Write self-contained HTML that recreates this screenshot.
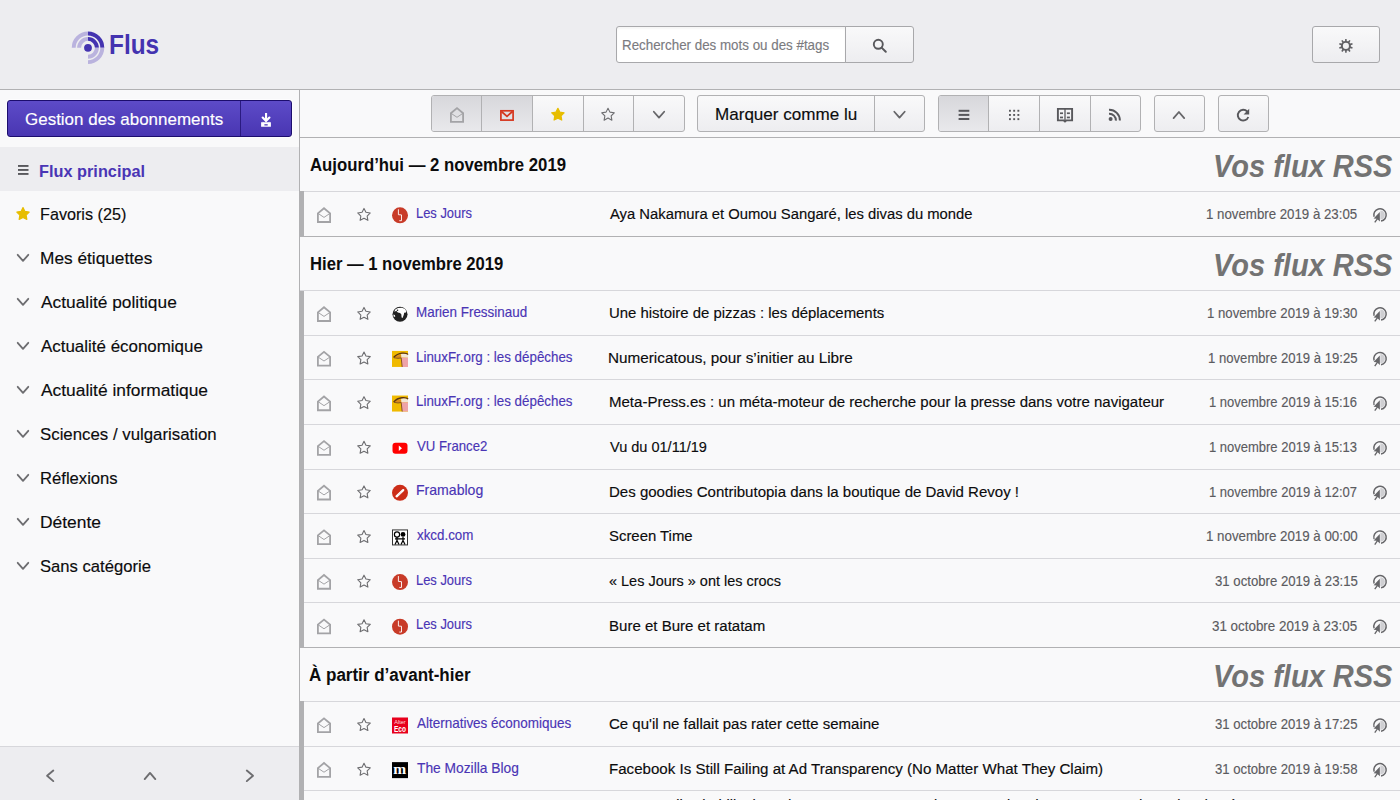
<!DOCTYPE html>
<html><head><meta charset="utf-8"><title>Flus</title>
<style>
html,body{margin:0;padding:0;width:1400px;height:800px;overflow:hidden;background:#f9f9fa;font-family:"Liberation Sans",sans-serif;}
.a,.b,.t{position:absolute;box-sizing:border-box;}
.t{white-space:pre;}
.r{-webkit-text-stroke:0.15px currentColor;}
.ic{position:absolute;left:0;top:0;}
</style></head><body>
<div class="a" style="left:0;top:0;width:1400px;height:90px;background:#ededf0;border-bottom:1px solid #b1b1b3"></div>
<div class="a" style="left:616px;top:26px;width:230px;height:37px;background:#fff;border:1px solid #a8a8ab;border-radius:3px 0 0 3px;box-shadow:inset 0 2px 2px rgba(0,0,0,.04)"></div>
<div class="a" style="left:845px;top:26px;width:69px;height:37px;background:linear-gradient(#f9f9fa,#ededf0);border:1px solid #b1b1b3;border-color:#a8a8ab;border-radius:0 3px 3px 0"></div>
<div class="a" style="left:1312px;top:26px;width:68px;height:37px;background:linear-gradient(#f9f9fa,#ededf0);border:1px solid #b1b1b3;border-color:#a8a8ab;border-radius:3px"></div>

<div class="a" style="left:0;top:90px;width:300px;height:710px;background:#f9f9fa;border-right:1px solid #b1b1b3"></div>
<div class="a" style="left:7px;top:100px;width:285px;height:37px;background:linear-gradient(#5d4bc8,#4936b2);border:1px solid #1c0d6e;border-radius:3px;box-shadow:0 0 0 1px rgba(255,255,255,.7)"></div>
<div class="a" style="left:240px;top:101px;width:1px;height:35px;background:#2a1a80"></div>
<div class="a" style="left:0;top:147px;width:299px;height:44px;background:#ededf0"></div>
<div class="a" style="left:0;top:746px;width:299px;height:54px;background:#ededf0;border-top:1px solid #d7d7db"></div>

<div class="a" style="left:300px;top:90px;width:1100px;height:48px;background:#f9f9fa;border-bottom:1px solid #b1b1b3"></div>
<div class="a" style="left:431px;top:95px;width:254px;height:37px;background:linear-gradient(#f9f9fa,#ededf0);border:1px solid #b1b1b3;border-radius:3px;overflow:hidden">
  <div class="a" style="left:0;top:0;width:101px;height:35px;background:linear-gradient(#d7d7db,#e9e9ec);"></div>
  <div class="a" style="left:49px;top:0;width:1px;height:35px;background:#b1b1b3"></div>
  <div class="a" style="left:100px;top:0;width:1px;height:35px;background:#b1b1b3"></div>
  <div class="a" style="left:151px;top:0;width:1px;height:35px;background:#b1b1b3"></div>
  <div class="a" style="left:201px;top:0;width:1px;height:35px;background:#b1b1b3"></div>
</div>
<div class="a" style="left:697px;top:95px;width:228px;height:37px;background:linear-gradient(#f9f9fa,#ededf0);border:1px solid #b1b1b3;border-radius:3px;overflow:hidden">
  <div class="a" style="left:176px;top:0;width:1px;height:35px;background:#b1b1b3"></div>
</div>
<div class="a" style="left:938px;top:95px;width:203px;height:37px;background:linear-gradient(#f9f9fa,#ededf0);border:1px solid #b1b1b3;border-radius:3px;overflow:hidden">
  <div class="a" style="left:0;top:0;width:50px;height:35px;background:linear-gradient(#d7d7db,#e9e9ec);"></div>
  <div class="a" style="left:49px;top:0;width:1px;height:35px;background:#b1b1b3"></div>
  <div class="a" style="left:100px;top:0;width:1px;height:35px;background:#b1b1b3"></div>
  <div class="a" style="left:151px;top:0;width:1px;height:35px;background:#b1b1b3"></div>
</div>
<div class="a" style="left:1154px;top:95px;width:51px;height:37px;background:linear-gradient(#f9f9fa,#ededf0);border:1px solid #b1b1b3;border-radius:3px"></div>
<div class="a" style="left:1218px;top:95px;width:51px;height:37px;background:linear-gradient(#f9f9fa,#ededf0);border:1px solid #b1b1b3;border-radius:3px"></div>

<div class="b" style="left:300px;top:191.000px;width:1100px;height:1px;background:#d7d7db"></div>
<div class="b" style="left:300px;top:236.000px;width:1100px;height:1px;background:#b1b1b3"></div>
<div class="b" style="left:300px;top:290.000px;width:1100px;height:1px;background:#d7d7db"></div>
<div class="b" style="left:300px;top:334.625px;width:1100px;height:1px;background:#d7d7db"></div>
<div class="b" style="left:300px;top:379.250px;width:1100px;height:1px;background:#d7d7db"></div>
<div class="b" style="left:300px;top:423.875px;width:1100px;height:1px;background:#d7d7db"></div>
<div class="b" style="left:300px;top:468.500px;width:1100px;height:1px;background:#d7d7db"></div>
<div class="b" style="left:300px;top:513.125px;width:1100px;height:1px;background:#d7d7db"></div>
<div class="b" style="left:300px;top:557.750px;width:1100px;height:1px;background:#d7d7db"></div>
<div class="b" style="left:300px;top:602.375px;width:1100px;height:1px;background:#d7d7db"></div>
<div class="b" style="left:300px;top:647.000px;width:1100px;height:1px;background:#b1b1b3"></div>
<div class="b" style="left:300px;top:701.200px;width:1100px;height:1px;background:#d7d7db"></div>
<div class="b" style="left:300px;top:745.825px;width:1100px;height:1px;background:#d7d7db"></div>
<div class="b" style="left:300px;top:790.450px;width:1100px;height:1px;background:#d7d7db"></div>
<div class="b" style="left:300px;top:191.000px;width:4px;height:45.000px;background:#b1b1b3"></div>
<div class="b" style="left:300px;top:291.000px;width:4px;height:356.000px;background:#b1b1b3"></div>
<div class="b" style="left:300px;top:701.200px;width:4px;height:98.800px;background:#b1b1b3"></div>
<div class="t" id="t0" style="top:30.62px;left:108.93px;font-size:27.50px;line-height:27.50px;color:#4433b0;font-weight:bold;font-style:normal;transform:scaleX(0.8870);transform-origin:0 0;">Flus</div>
<div class="t r" id="t1" style="top:37.92px;left:621.58px;font-size:14.50px;line-height:14.50px;color:#7b7b7f;font-weight:normal;font-style:normal;transform:scaleX(0.9211);transform-origin:0 0;">Rechercher des mots ou des #tags</div>
<div class="t r" id="t2" style="top:111.01px;left:24.70px;font-size:17.00px;line-height:17.00px;color:#ffffff;font-weight:normal;font-style:normal;transform:scaleX(0.9985);transform-origin:0 0;">Gestion des abonnements</div>
<div class="t" id="t3" style="top:162.71px;left:39.04px;font-size:17.00px;line-height:17.00px;color:#4a35b5;font-weight:bold;font-style:normal;transform:scaleX(0.9593);transform-origin:0 0;">Flux principal</div>
<div class="t r" id="t4" style="top:205.91px;left:40.05px;font-size:17.00px;line-height:17.00px;color:#0c0c0d;font-weight:normal;font-style:normal;transform:scaleX(0.9517);transform-origin:0 0;">Favoris (25)</div>
<div class="t r" id="t5" style="top:249.91px;left:39.78px;font-size:17.00px;line-height:17.00px;color:#0c0c0d;font-weight:normal;font-style:normal;transform:scaleX(1.0156);transform-origin:0 0;">Mes étiquettes</div>
<div class="t r" id="t6" style="top:293.91px;left:40.80px;font-size:17.00px;line-height:17.00px;color:#0c0c0d;font-weight:normal;font-style:normal;transform:scaleX(1.0188);transform-origin:0 0;">Actualité politique</div>
<div class="t r" id="t7" style="top:337.91px;left:40.80px;font-size:17.00px;line-height:17.00px;color:#0c0c0d;font-weight:normal;font-style:normal;transform:scaleX(0.9957);transform-origin:0 0;">Actualité économique</div>
<div class="t r" id="t8" style="top:381.91px;left:40.80px;font-size:17.00px;line-height:17.00px;color:#0c0c0d;font-weight:normal;font-style:normal;transform:scaleX(1.0215);transform-origin:0 0;">Actualité informatique</div>
<div class="t r" id="t9" style="top:425.91px;left:39.81px;font-size:17.00px;line-height:17.00px;color:#0c0c0d;font-weight:normal;font-style:normal;transform:scaleX(0.9893);transform-origin:0 0;">Sciences / vulgarisation</div>
<div class="t r" id="t10" style="top:469.91px;left:39.82px;font-size:17.00px;line-height:17.00px;color:#0c0c0d;font-weight:normal;font-style:normal;transform:scaleX(0.9782);transform-origin:0 0;">Réflexions</div>
<div class="t r" id="t11" style="top:513.91px;left:39.78px;font-size:17.00px;line-height:17.00px;color:#0c0c0d;font-weight:normal;font-style:normal;transform:scaleX(1.0241);transform-origin:0 0;">Détente</div>
<div class="t r" id="t12" style="top:557.91px;left:39.82px;font-size:17.00px;line-height:17.00px;color:#0c0c0d;font-weight:normal;font-style:normal;transform:scaleX(0.9786);transform-origin:0 0;">Sans catégorie</div>
<div class="t r" id="t13" style="top:105.81px;left:715.00px;font-size:17.00px;line-height:17.00px;color:#0c0c0d;font-weight:normal;font-style:normal;transform:scaleX(1.0036);transform-origin:0 0;">Marquer comme lu</div>
<div class="t" id="t14" style="top:156.17px;left:309.50px;font-size:18.70px;line-height:18.70px;color:#0c0c0d;font-weight:bold;font-style:normal;transform:scaleX(0.8965);transform-origin:0 0;">Aujourd’hui — 2 novembre 2019</div>
<div class="t" id="t15" style="top:149.51px;left:1212.68px;font-size:32.00px;line-height:32.00px;color:#737373;font-weight:bold;font-style:italic;transform:scaleX(0.9062);transform-origin:0 0;">Vos flux RSS</div>
<div class="t" id="t16" style="top:255.17px;left:309.51px;font-size:18.70px;line-height:18.70px;color:#0c0c0d;font-weight:bold;font-style:normal;transform:scaleX(0.8903);transform-origin:0 0;">Hier — 1 novembre 2019</div>
<div class="t" id="t17" style="top:248.51px;left:1212.68px;font-size:32.00px;line-height:32.00px;color:#737373;font-weight:bold;font-style:italic;transform:scaleX(0.9062);transform-origin:0 0;">Vos flux RSS</div>
<div class="t" id="t18" style="top:666.17px;left:309.49px;font-size:18.70px;line-height:18.70px;color:#0c0c0d;font-weight:bold;font-style:normal;transform:scaleX(0.9097);transform-origin:0 0;">À partir d’avant-hier</div>
<div class="t" id="t19" style="top:659.51px;left:1212.68px;font-size:32.00px;line-height:32.00px;color:#737373;font-weight:bold;font-style:italic;transform:scaleX(0.9062);transform-origin:0 0;">Vos flux RSS</div>
<div class="t r" id="t20" style="top:205.92px;left:415.61px;font-size:14.50px;line-height:14.50px;color:#4a35b5;font-weight:normal;font-style:normal;transform:scaleX(0.8902);transform-origin:0 0;">Les Jours</div>
<div class="t r" id="t21" style="top:206.13px;left:609.50px;font-size:15.20px;line-height:15.20px;color:#0c0c0d;font-weight:normal;font-style:normal;transform:scaleX(0.9744);transform-origin:0 0;">Aya Nakamura et Oumou Sangaré, les divas du monde</div>
<div class="t r" id="t22" style="top:207.18px;left:1206.27px;font-size:14.20px;line-height:14.20px;color:#5b5b5f;font-weight:normal;font-style:normal;transform:scaleX(0.9350);transform-origin:0 0;">1 novembre 2019 à 23:05</div>
<div class="t r" id="t23" style="top:304.92px;left:415.57px;font-size:14.50px;line-height:14.50px;color:#4a35b5;font-weight:normal;font-style:normal;transform:scaleX(0.9254);transform-origin:0 0;">Marien Fressinaud</div>
<div class="t r" id="t24" style="top:305.13px;left:608.52px;font-size:15.20px;line-height:15.20px;color:#0c0c0d;font-weight:normal;font-style:normal;transform:scaleX(0.9821);transform-origin:0 0;">Une histoire de pizzas : les déplacements</div>
<div class="t r" id="t25" style="top:306.18px;left:1207.07px;font-size:14.20px;line-height:14.20px;color:#5b5b5f;font-weight:normal;font-style:normal;transform:scaleX(0.9300);transform-origin:0 0;">1 novembre 2019 à 19:30</div>
<div class="t r" id="t26" style="top:349.55px;left:415.58px;font-size:14.50px;line-height:14.50px;color:#4a35b5;font-weight:normal;font-style:normal;transform:scaleX(0.9201);transform-origin:0 0;">LinuxFr.org : les dépêches</div>
<div class="t r" id="t27" style="top:349.76px;left:608.49px;font-size:15.20px;line-height:15.20px;color:#0c0c0d;font-weight:normal;font-style:normal;transform:scaleX(1.0066);transform-origin:0 0;">Numericatous, pour s’initier au Libre</div>
<div class="t r" id="t28" style="top:350.80px;left:1207.98px;font-size:14.20px;line-height:14.20px;color:#5b5b5f;font-weight:normal;font-style:normal;transform:scaleX(0.9244);transform-origin:0 0;">1 novembre 2019 à 19:25</div>
<div class="t r" id="t29" style="top:394.17px;left:415.58px;font-size:14.50px;line-height:14.50px;color:#4a35b5;font-weight:normal;font-style:normal;transform:scaleX(0.9201);transform-origin:0 0;">LinuxFr.org : les dépêches</div>
<div class="t r" id="t30" style="top:394.38px;left:608.51px;font-size:15.20px;line-height:15.20px;color:#0c0c0d;font-weight:normal;font-style:normal;transform:scaleX(0.9888);transform-origin:0 0;">Meta-Press.es : un méta-moteur de recherche pour la presse dans votre navigateur</div>
<div class="t r" id="t31" style="top:395.43px;left:1209.38px;font-size:14.20px;line-height:14.20px;color:#5b5b5f;font-weight:normal;font-style:normal;transform:scaleX(0.9156);transform-origin:0 0;">1 novembre 2019 à 15:16</div>
<div class="t r" id="t32" style="top:438.80px;left:416.50px;font-size:14.50px;line-height:14.50px;color:#4a35b5;font-weight:normal;font-style:normal;transform:scaleX(0.9091);transform-origin:0 0;">VU France2</div>
<div class="t r" id="t33" style="top:439.01px;left:609.50px;font-size:15.20px;line-height:15.20px;color:#0c0c0d;font-weight:normal;font-style:normal;transform:scaleX(0.9564);transform-origin:0 0;">Vu du 01/11/19</div>
<div class="t r" id="t34" style="top:440.05px;left:1209.38px;font-size:14.20px;line-height:14.20px;color:#5b5b5f;font-weight:normal;font-style:normal;transform:scaleX(0.9156);transform-origin:0 0;">1 novembre 2019 à 15:13</div>
<div class="t r" id="t35" style="top:483.42px;left:415.53px;font-size:14.50px;line-height:14.50px;color:#4a35b5;font-weight:normal;font-style:normal;transform:scaleX(0.9706);transform-origin:0 0;">Framablog</div>
<div class="t r" id="t36" style="top:483.63px;left:608.51px;font-size:15.20px;line-height:15.20px;color:#0c0c0d;font-weight:normal;font-style:normal;transform:scaleX(0.9891);transform-origin:0 0;">Des goodies Contributopia dans la boutique de David Revoy !</div>
<div class="t r" id="t37" style="top:484.68px;left:1209.38px;font-size:14.20px;line-height:14.20px;color:#5b5b5f;font-weight:normal;font-style:normal;transform:scaleX(0.9156);transform-origin:0 0;">1 novembre 2019 à 12:07</div>
<div class="t r" id="t38" style="top:528.05px;left:416.50px;font-size:14.50px;line-height:14.50px;color:#4a35b5;font-weight:normal;font-style:normal;transform:scaleX(0.9197);transform-origin:0 0;">xkcd.com</div>
<div class="t r" id="t39" style="top:528.26px;left:608.52px;font-size:15.20px;line-height:15.20px;color:#0c0c0d;font-weight:normal;font-style:normal;transform:scaleX(0.9810);transform-origin:0 0;">Screen Time</div>
<div class="t r" id="t40" style="top:529.30px;left:1205.76px;font-size:14.20px;line-height:14.20px;color:#5b5b5f;font-weight:normal;font-style:normal;transform:scaleX(0.9381);transform-origin:0 0;">1 novembre 2019 à 00:00</div>
<div class="t r" id="t41" style="top:572.67px;left:415.61px;font-size:14.50px;line-height:14.50px;color:#4a35b5;font-weight:normal;font-style:normal;transform:scaleX(0.8902);transform-origin:0 0;">Les Jours</div>
<div class="t r" id="t42" style="top:572.88px;left:608.55px;font-size:15.20px;line-height:15.20px;color:#0c0c0d;font-weight:normal;font-style:normal;transform:scaleX(0.9525);transform-origin:0 0;">« Les Jours » ont les crocs</div>
<div class="t r" id="t43" style="top:573.93px;left:1214.77px;font-size:14.20px;line-height:14.20px;color:#5b5b5f;font-weight:normal;font-style:normal;transform:scaleX(0.9283);transform-origin:0 0;">31 octobre 2019 à 23:15</div>
<div class="t r" id="t44" style="top:617.30px;left:415.61px;font-size:14.50px;line-height:14.50px;color:#4a35b5;font-weight:normal;font-style:normal;transform:scaleX(0.8902);transform-origin:0 0;">Les Jours</div>
<div class="t r" id="t45" style="top:617.51px;left:608.51px;font-size:15.20px;line-height:15.20px;color:#0c0c0d;font-weight:normal;font-style:normal;transform:scaleX(0.9897);transform-origin:0 0;">Bure et Bure et ratatam</div>
<div class="t r" id="t46" style="top:618.55px;left:1212.46px;font-size:14.20px;line-height:14.20px;color:#5b5b5f;font-weight:normal;font-style:normal;transform:scaleX(0.9434);transform-origin:0 0;">31 octobre 2019 à 23:05</div>
<div class="t r" id="t47" style="top:716.12px;left:416.50px;font-size:14.50px;line-height:14.50px;color:#4a35b5;font-weight:normal;font-style:normal;transform:scaleX(0.9283);transform-origin:0 0;">Alternatives économiques</div>
<div class="t r" id="t48" style="top:716.33px;left:608.51px;font-size:15.20px;line-height:15.20px;color:#0c0c0d;font-weight:normal;font-style:normal;transform:scaleX(0.9875);transform-origin:0 0;">Ce qu'il ne fallait pas rater cette semaine</div>
<div class="t r" id="t49" style="top:717.38px;left:1215.07px;font-size:14.20px;line-height:14.20px;color:#5b5b5f;font-weight:normal;font-style:normal;transform:scaleX(0.9263);transform-origin:0 0;">31 octobre 2019 à 17:25</div>
<div class="t r" id="t50" style="top:760.75px;left:416.50px;font-size:14.50px;line-height:14.50px;color:#4a35b5;font-weight:normal;font-style:normal;transform:scaleX(0.9500);transform-origin:0 0;">The Mozilla Blog</div>
<div class="t r" id="t51" style="top:760.96px;left:608.51px;font-size:15.20px;line-height:15.20px;color:#0c0c0d;font-weight:normal;font-style:normal;transform:scaleX(0.9943);transform-origin:0 0;">Facebook Is Still Failing at Ad Transparency (No Matter What They Claim)</div>
<div class="t r" id="t52" style="top:762.00px;left:1215.07px;font-size:14.20px;line-height:14.20px;color:#5b5b5f;font-weight:normal;font-style:normal;transform:scaleX(0.9263);transform-origin:0 0;">31 octobre 2019 à 19:58</div>
<div class="t r" id="t53" style="top:796.83px;left:608.54px;font-size:15.20px;line-height:15.20px;color:#0c0c0d;font-weight:normal;font-style:normal;transform:scaleX(0.9600);transform-origin:0 0;">Les nouvelles habilitations du gouvernement pour la restauration de Notre-Dame de Paris adoptées</div>
<svg class="ic" width="1400" height="800" viewBox="0 0 1400 800"><path d="M88.00 38.90 A8.90 8.90 0 0 1 96.90 47.80" stroke="#4433b0" stroke-width="3.9" fill="none"/><path d="M79.10 47.80 A8.90 8.90 0 0 1 88.00 38.90" stroke="#bab3de" stroke-width="3.9" fill="none"/><path d="M96.90 47.80 A8.90 8.90 0 0 1 88.00 56.70" stroke="#bab3de" stroke-width="3.9" fill="none"/><path d="M88.00 33.50 A14.30 14.30 0 0 1 102.30 47.80" stroke="#4433b0" stroke-width="3.9" fill="none"/><path d="M73.70 47.80 A14.30 14.30 0 0 1 88.00 33.50" stroke="#bab3de" stroke-width="3.9" fill="none"/><path d="M102.30 47.80 A14.30 14.30 0 0 1 88.00 62.10" stroke="#bab3de" stroke-width="3.9" fill="none"/><circle cx="88" cy="47.8" r="3.9" fill="#4433b0"/><circle cx="878.3" cy="44.3" r="4.5" fill="none" stroke="#58585c" stroke-width="1.9"/><path d="M881.6 47.6 L885.8 51.8" stroke="#58585c" stroke-width="2" stroke-linecap="round"/><path d="M1344.80 45.90 L1345.15 39.00 L1346.65 39.00 L1347.00 45.90 Z" transform="rotate(0 1345.90 45.90)" fill="#606064"/><path d="M1344.80 45.90 L1345.15 39.00 L1346.65 39.00 L1347.00 45.90 Z" transform="rotate(36 1345.90 45.90)" fill="#606064"/><path d="M1344.80 45.90 L1345.15 39.00 L1346.65 39.00 L1347.00 45.90 Z" transform="rotate(72 1345.90 45.90)" fill="#606064"/><path d="M1344.80 45.90 L1345.15 39.00 L1346.65 39.00 L1347.00 45.90 Z" transform="rotate(108 1345.90 45.90)" fill="#606064"/><path d="M1344.80 45.90 L1345.15 39.00 L1346.65 39.00 L1347.00 45.90 Z" transform="rotate(144 1345.90 45.90)" fill="#606064"/><path d="M1344.80 45.90 L1345.15 39.00 L1346.65 39.00 L1347.00 45.90 Z" transform="rotate(180 1345.90 45.90)" fill="#606064"/><path d="M1344.80 45.90 L1345.15 39.00 L1346.65 39.00 L1347.00 45.90 Z" transform="rotate(216 1345.90 45.90)" fill="#606064"/><path d="M1344.80 45.90 L1345.15 39.00 L1346.65 39.00 L1347.00 45.90 Z" transform="rotate(252 1345.90 45.90)" fill="#606064"/><path d="M1344.80 45.90 L1345.15 39.00 L1346.65 39.00 L1347.00 45.90 Z" transform="rotate(288 1345.90 45.90)" fill="#606064"/><path d="M1344.80 45.90 L1345.15 39.00 L1346.65 39.00 L1347.00 45.90 Z" transform="rotate(324 1345.90 45.90)" fill="#606064"/><circle cx="1345.9" cy="45.9" r="4.95" fill="#606064"/><circle cx="1345.9" cy="45.9" r="3.05" fill="#f1f1f3"/><rect x="265" y="113" width="2.1" height="7.5" fill="#fff"/><path d="M262.7 117.6 L266.05 121 L269.4 117.6" stroke="#fff" stroke-width="2.2" fill="none" stroke-linecap="round"/><path d="M261.1 122.2 H262.8 V121.5 L263.6 122.2 H268.5 L269.3 121.5 V122.2 H270.9 V126.8 H261.1 Z" fill="#fff"/><rect x="264.4" y="124.2" width="3.3" height="1.3" fill="#4e3bb7"/><rect x="18" y="165.0" width="10.5" height="1.9" fill="#58585c"/><rect x="18" y="169.0" width="10.5" height="1.9" fill="#58585c"/><rect x="18" y="173.0" width="10.5" height="1.9" fill="#58585c"/><path d="M23.00 207.60 L24.94 211.43 L29.18 212.09 L26.14 215.12 L26.82 219.36 L23.00 217.40 L19.18 219.36 L19.86 215.12 L16.82 212.09 L21.06 211.43 Z" fill="#e7bd00" stroke="#e7bd00" stroke-width="1.2" stroke-linejoin="round"/><path d="M17.70 254.80 L23.00 260.80 L28.30 254.80" fill="none" stroke="#6d6d70" stroke-width="1.8" stroke-linecap="round" stroke-linejoin="round"/><path d="M17.70 298.80 L23.00 304.80 L28.30 298.80" fill="none" stroke="#6d6d70" stroke-width="1.8" stroke-linecap="round" stroke-linejoin="round"/><path d="M17.70 342.80 L23.00 348.80 L28.30 342.80" fill="none" stroke="#6d6d70" stroke-width="1.8" stroke-linecap="round" stroke-linejoin="round"/><path d="M17.70 386.80 L23.00 392.80 L28.30 386.80" fill="none" stroke="#6d6d70" stroke-width="1.8" stroke-linecap="round" stroke-linejoin="round"/><path d="M17.70 430.80 L23.00 436.80 L28.30 430.80" fill="none" stroke="#6d6d70" stroke-width="1.8" stroke-linecap="round" stroke-linejoin="round"/><path d="M17.70 474.80 L23.00 480.80 L28.30 474.80" fill="none" stroke="#6d6d70" stroke-width="1.8" stroke-linecap="round" stroke-linejoin="round"/><path d="M17.70 518.80 L23.00 524.80 L28.30 518.80" fill="none" stroke="#6d6d70" stroke-width="1.8" stroke-linecap="round" stroke-linejoin="round"/><path d="M17.70 562.80 L23.00 568.80 L28.30 562.80" fill="none" stroke="#6d6d70" stroke-width="1.8" stroke-linecap="round" stroke-linejoin="round"/><path d="M53.30 770.50 L47.10 775.80 L53.30 781.10" fill="none" stroke="#6d6d70" stroke-width="1.9" stroke-linecap="round" stroke-linejoin="round"/><path d="M144.70 779.10 L150.00 772.90 L155.30 779.10" fill="none" stroke="#6d6d70" stroke-width="1.9" stroke-linecap="round" stroke-linejoin="round"/><path d="M246.80 770.50 L253.00 775.80 L246.80 781.10" fill="none" stroke="#6d6d70" stroke-width="1.9" stroke-linecap="round" stroke-linejoin="round"/><path d="M450.9 121.9 V113.2 L457 108.1 L463.1 113.2 V121.9 Z" fill="none" stroke="#a3a3a6" stroke-width="1.8" stroke-linejoin="miter"/><path d="M450.9 113.2 L457 117.3 L463.1 113.2" fill="none" stroke="#a3a3a6" stroke-width="1"/><rect x="500.9" y="110.8" width="12.2" height="9.3" fill="none" stroke="#d5361e" stroke-width="1.7"/><path d="M501.5 111.5 L507 116.3 L512.5 111.5" fill="none" stroke="#d5361e" stroke-width="1.7"/><path d="M557.90 108.30 L559.84 112.13 L564.08 112.79 L561.04 115.82 L561.72 120.06 L557.90 118.10 L554.08 120.06 L554.76 115.82 L551.72 112.79 L555.96 112.13 Z" fill="#e7bd00" stroke="#e7bd00" stroke-width="1.2" stroke-linejoin="round"/><path d="M608.00 108.20 L609.94 112.13 L614.28 112.76 L611.14 115.82 L611.88 120.14 L608.00 118.10 L604.12 120.14 L604.86 115.82 L601.72 112.76 L606.06 112.13 Z" fill="none" stroke="#6d6d70" stroke-width="1.1" stroke-linejoin="round"/><path d="M653.80 111.75 L659.00 117.65 L664.20 111.75" fill="none" stroke="#666669" stroke-width="1.75" stroke-linecap="round" stroke-linejoin="round"/><path d="M894.30 111.75 L899.50 117.65 L904.70 111.75" fill="none" stroke="#666669" stroke-width="1.75" stroke-linecap="round" stroke-linejoin="round"/><rect x="958.6" y="109.8" width="10.7" height="2" fill="#58585c"/><rect x="958.6" y="113.9" width="10.7" height="2" fill="#58585c"/><rect x="958.6" y="118.0" width="10.7" height="2" fill="#58585c"/><rect x="1009.0" y="109.8" width="1.9" height="1.9" fill="#58585c"/><rect x="1009.0" y="114.0" width="1.9" height="1.9" fill="#58585c"/><rect x="1009.0" y="118.2" width="1.9" height="1.9" fill="#58585c"/><rect x="1013.2" y="109.8" width="1.9" height="1.9" fill="#58585c"/><rect x="1013.2" y="114.0" width="1.9" height="1.9" fill="#58585c"/><rect x="1013.2" y="118.2" width="1.9" height="1.9" fill="#58585c"/><rect x="1017.4" y="109.8" width="1.9" height="1.9" fill="#58585c"/><rect x="1017.4" y="114.0" width="1.9" height="1.9" fill="#58585c"/><rect x="1017.4" y="118.2" width="1.9" height="1.9" fill="#58585c"/><path d="M1057.9 108.9 H1072.1 V120.4 H1066.2 L1065 121.4 L1063.8 120.4 H1057.9 Z" fill="none" stroke="#58585c" stroke-width="1.9"/><path d="M1065 109 V120" stroke="#58585c" stroke-width="1.3"/><rect x="1060" y="112.4" width="3" height="1.7" fill="#58585c"/><rect x="1066.9" y="112.4" width="3" height="1.7" fill="#58585c"/><rect x="1060" y="116.6" width="3" height="1.7" fill="#58585c"/><rect x="1066.9" y="116.6" width="3" height="1.7" fill="#58585c"/><circle cx="1110.6" cy="119.1" r="2" fill="#58585c"/><path d="M1109 113.7 A6.6 6.6 0 0 1 1115.9 120.6 M1109 109.8 A10.6 10.6 0 0 1 1119.9 120.6" fill="none" stroke="#58585c" stroke-width="2"/><path d="M1173.60 118.10 L1178.90 112.00 L1184.20 118.10" fill="none" stroke="#666669" stroke-width="1.8" stroke-linecap="round" stroke-linejoin="round"/><path d="M1247.2 111.5 A5.4 5.4 0 1 0 1248.3 117" fill="none" stroke="#58585c" stroke-width="1.9"/><path d="M1249.2 108.8 V114.6 H1243.6 Z" fill="#58585c"/><path d="M317.9 222.0 V213.29999999999998 L324 208.2 L330.1 213.29999999999998 V222.0 Z" fill="none" stroke="#a3a3a6" stroke-width="1.8" stroke-linejoin="miter"/><path d="M317.9 213.29999999999998 L324 217.4 L330.1 213.29999999999998" fill="none" stroke="#a3a3a6" stroke-width="1"/><path d="M364.00 208.40 L365.94 212.33 L370.28 212.96 L367.14 216.02 L367.88 220.34 L364.00 218.30 L360.12 220.34 L360.86 216.02 L357.72 212.96 L362.06 212.33 Z" fill="none" stroke="#6d6d70" stroke-width="1.1" stroke-linejoin="round"/><circle cx="400.00" cy="215.30" r="8" fill="#c83b28"/><path d="M398.40 209.30 V214.70 L401.50 214.90 V220.70 H399.30" fill="none" stroke="#fff" stroke-width="0.9"/><path d="M1374.07 216.81 A6.20 6.20 0 1 1 1381.02 221.11" fill="none" stroke="#666669" stroke-width="1.5"/><path d="M1380.30 210.40 A4.6 4.6 0 0 1 1380.30 219.60 Z" fill="#cfcfd2"/><path d="M1379.80 212.00 L1379.90 221.50 L1377.70 219.40 L1375.30 222.80 L1374.20 222.10 L1376.60 218.70 L1373.60 218.40 Z" fill="#666669"/><path d="M317.9 321.0 V312.3 L324 307.20000000000005 L330.1 312.3 V321.0 Z" fill="none" stroke="#a3a3a6" stroke-width="1.8" stroke-linejoin="miter"/><path d="M317.9 312.3 L324 316.40000000000003 L330.1 312.3" fill="none" stroke="#a3a3a6" stroke-width="1"/><path d="M364.00 307.40 L365.94 311.33 L370.28 311.96 L367.14 315.02 L367.88 319.34 L364.00 317.30 L360.12 319.34 L360.86 315.02 L357.72 311.96 L362.06 311.33 Z" fill="none" stroke="#6d6d70" stroke-width="1.1" stroke-linejoin="round"/><circle cx="400.00" cy="314.30" r="7.5" fill="#222"/><path d="M394.20 311.50 L395.50 309.30 L398.00 307.90 L402.00 307.70 L405.00 309.10 L406.30 311.30 L406.00 312.50 L404.20 312.80 L403.80 314.80 L402.60 318.10 L401.60 317.50 L401.30 314.30 L400.00 312.90 L397.80 312.60 L396.50 311.10 Z" fill="#fff"/><path d="M393.30 314.60 L394.80 315.00 L395.30 316.50 L393.80 316.90 Z" fill="#fff"/><circle cx="397.50" cy="310.30" r="0.8" fill="#222"/><path d="M1374.07 315.81 A6.20 6.20 0 1 1 1381.02 320.11" fill="none" stroke="#666669" stroke-width="1.5"/><path d="M1380.30 309.40 A4.6 4.6 0 0 1 1380.30 318.60 Z" fill="#cfcfd2"/><path d="M1379.80 311.00 L1379.90 320.50 L1377.70 318.40 L1375.30 321.80 L1374.20 321.10 L1376.60 317.70 L1373.60 317.40 Z" fill="#666669"/><path d="M317.9 365.625 V356.925 L324 351.82500000000005 L330.1 356.925 V365.625 Z" fill="none" stroke="#a3a3a6" stroke-width="1.8" stroke-linejoin="miter"/><path d="M317.9 356.925 L324 361.02500000000003 L330.1 356.925" fill="none" stroke="#a3a3a6" stroke-width="1"/><path d="M364.00 352.02 L365.94 355.96 L370.28 356.59 L367.14 359.64 L367.88 363.96 L364.00 361.93 L360.12 363.96 L360.86 359.64 L357.72 356.59 L362.06 355.96 Z" fill="none" stroke="#6d6d70" stroke-width="1.1" stroke-linejoin="round"/><rect x="392.00" y="350.93" width="16" height="16" fill="#f0ba00"/><path d="M394.00 357.12 L397.00 355.53 L401.00 355.12 L401.50 357.73 L398.00 358.12 Z" fill="#d98a1c"/><path d="M401.00 353.73 L405.00 353.53 L408.00 354.73 L408.00 357.73 L401.40 357.53 Z" fill="#f1e6d6"/><path d="M401.20 357.53 L408.00 357.73 L408.00 366.93 L402.20 366.93 L401.60 361.93 Z" fill="#eea3a8"/><path d="M393.60 357.53 Q397.00 353.53 402.00 353.12 T408.00 354.53" fill="none" stroke="#5c3414" stroke-width="1.3"/><path d="M394.00 357.73 L398.00 358.32 L401.20 357.93 L402.20 366.93" fill="none" stroke="#7a4a20" stroke-width="0.9"/><path d="M1374.07 360.44 A6.20 6.20 0 1 1 1381.02 364.74" fill="none" stroke="#666669" stroke-width="1.5"/><path d="M1380.30 354.02 A4.6 4.6 0 0 1 1380.30 363.23 Z" fill="#cfcfd2"/><path d="M1379.80 355.62 L1379.90 365.12 L1377.70 363.02 L1375.30 366.43 L1374.20 365.73 L1376.60 362.32 L1373.60 362.02 Z" fill="#666669"/><path d="M317.9 410.25 V401.55 L324 396.45000000000005 L330.1 401.55 V410.25 Z" fill="none" stroke="#a3a3a6" stroke-width="1.8" stroke-linejoin="miter"/><path d="M317.9 401.55 L324 405.65000000000003 L330.1 401.55" fill="none" stroke="#a3a3a6" stroke-width="1"/><path d="M364.00 396.65 L365.94 400.58 L370.28 401.21 L367.14 404.27 L367.88 408.59 L364.00 406.55 L360.12 408.59 L360.86 404.27 L357.72 401.21 L362.06 400.58 Z" fill="none" stroke="#6d6d70" stroke-width="1.1" stroke-linejoin="round"/><rect x="392.00" y="395.55" width="16" height="16" fill="#f0ba00"/><path d="M394.00 401.75 L397.00 400.15 L401.00 399.75 L401.50 402.35 L398.00 402.75 Z" fill="#d98a1c"/><path d="M401.00 398.35 L405.00 398.15 L408.00 399.35 L408.00 402.35 L401.40 402.15 Z" fill="#f1e6d6"/><path d="M401.20 402.15 L408.00 402.35 L408.00 411.55 L402.20 411.55 L401.60 406.55 Z" fill="#eea3a8"/><path d="M393.60 402.15 Q397.00 398.15 402.00 397.75 T408.00 399.15" fill="none" stroke="#5c3414" stroke-width="1.3"/><path d="M394.00 402.35 L398.00 402.95 L401.20 402.55 L402.20 411.55" fill="none" stroke="#7a4a20" stroke-width="0.9"/><path d="M1374.07 405.06 A6.20 6.20 0 1 1 1381.02 409.36" fill="none" stroke="#666669" stroke-width="1.5"/><path d="M1380.30 398.65 A4.6 4.6 0 0 1 1380.30 407.85 Z" fill="#cfcfd2"/><path d="M1379.80 400.25 L1379.90 409.75 L1377.70 407.65 L1375.30 411.05 L1374.20 410.35 L1376.60 406.95 L1373.60 406.65 Z" fill="#666669"/><path d="M317.9 454.875 V446.175 L324 441.07500000000005 L330.1 446.175 V454.875 Z" fill="none" stroke="#a3a3a6" stroke-width="1.8" stroke-linejoin="miter"/><path d="M317.9 446.175 L324 450.27500000000003 L330.1 446.175" fill="none" stroke="#a3a3a6" stroke-width="1"/><path d="M364.00 441.27 L365.94 445.21 L370.28 445.84 L367.14 448.89 L367.88 453.21 L364.00 451.18 L360.12 453.21 L360.86 448.89 L357.72 445.84 L362.06 445.21 Z" fill="none" stroke="#6d6d70" stroke-width="1.1" stroke-linejoin="round"/><rect x="392.5" y="442.675" width="15" height="11" rx="3" fill="#ff0000"/><path d="M398.8 445.375 L402 448.175 L398.8 450.975 Z" fill="#fff"/><path d="M1374.07 449.69 A6.20 6.20 0 1 1 1381.02 453.99" fill="none" stroke="#666669" stroke-width="1.5"/><path d="M1380.30 443.27 A4.6 4.6 0 0 1 1380.30 452.48 Z" fill="#cfcfd2"/><path d="M1379.80 444.88 L1379.90 454.38 L1377.70 452.27 L1375.30 455.68 L1374.20 454.98 L1376.60 451.57 L1373.60 451.27 Z" fill="#666669"/><path d="M317.9 499.5 V490.8 L324 485.70000000000005 L330.1 490.8 V499.5 Z" fill="none" stroke="#a3a3a6" stroke-width="1.8" stroke-linejoin="miter"/><path d="M317.9 490.8 L324 494.90000000000003 L330.1 490.8" fill="none" stroke="#a3a3a6" stroke-width="1"/><path d="M364.00 485.90 L365.94 489.83 L370.28 490.46 L367.14 493.52 L367.88 497.84 L364.00 495.80 L360.12 497.84 L360.86 493.52 L357.72 490.46 L362.06 489.83 Z" fill="none" stroke="#6d6d70" stroke-width="1.1" stroke-linejoin="round"/><circle cx="400.00" cy="492.80" r="8" fill="#cc2d18"/><path d="M396.60 496.30 L403.20 490.10" stroke="#fff" stroke-width="2.3" stroke-linecap="round"/><path d="M398.20 495.20 L401.60 492.00" stroke="#f4c8d0" stroke-width="0.7"/><path d="M1374.07 494.31 A6.20 6.20 0 1 1 1381.02 498.61" fill="none" stroke="#666669" stroke-width="1.5"/><path d="M1380.30 487.90 A4.6 4.6 0 0 1 1380.30 497.10 Z" fill="#cfcfd2"/><path d="M1379.80 489.50 L1379.90 499.00 L1377.70 496.90 L1375.30 500.30 L1374.20 499.60 L1376.60 496.20 L1373.60 495.90 Z" fill="#666669"/><path d="M317.9 544.125 V535.4250000000001 L324 530.325 L330.1 535.4250000000001 V544.125 Z" fill="none" stroke="#a3a3a6" stroke-width="1.8" stroke-linejoin="miter"/><path d="M317.9 535.4250000000001 L324 539.525 L330.1 535.4250000000001" fill="none" stroke="#a3a3a6" stroke-width="1"/><path d="M364.00 530.52 L365.94 534.46 L370.28 535.09 L367.14 538.14 L367.88 542.46 L364.00 540.42 L360.12 542.46 L360.86 538.14 L357.72 535.09 L362.06 534.46 Z" fill="none" stroke="#6d6d70" stroke-width="1.1" stroke-linejoin="round"/><rect x="392.5" y="529.925" width="15" height="15" fill="#fff" stroke="#333" stroke-width="1"/><circle cx="397" cy="534.425" r="2.6" fill="none" stroke="#000" stroke-width="1.2"/><circle cx="403" cy="534.425" r="2.4" fill="#000"/><path d="M397 536.925 V540.425 M395 544.425 L397 540.425 L399 544.425 M395 538.925 L405 538.925 M403 536.925 V540.425 M401 544.425 L403 540.425 L405 544.425" stroke="#000" stroke-width="1.2" fill="none"/><path d="M1374.07 538.94 A6.20 6.20 0 1 1 1381.02 543.24" fill="none" stroke="#666669" stroke-width="1.5"/><path d="M1380.30 532.52 A4.6 4.6 0 0 1 1380.30 541.73 Z" fill="#cfcfd2"/><path d="M1379.80 534.12 L1379.90 543.62 L1377.70 541.52 L1375.30 544.92 L1374.20 544.23 L1376.60 540.83 L1373.60 540.52 Z" fill="#666669"/><path d="M317.9 588.75 V580.0500000000001 L324 574.95 L330.1 580.0500000000001 V588.75 Z" fill="none" stroke="#a3a3a6" stroke-width="1.8" stroke-linejoin="miter"/><path d="M317.9 580.0500000000001 L324 584.15 L330.1 580.0500000000001" fill="none" stroke="#a3a3a6" stroke-width="1"/><path d="M364.00 575.15 L365.94 579.08 L370.28 579.71 L367.14 582.77 L367.88 587.09 L364.00 585.05 L360.12 587.09 L360.86 582.77 L357.72 579.71 L362.06 579.08 Z" fill="none" stroke="#6d6d70" stroke-width="1.1" stroke-linejoin="round"/><circle cx="400.00" cy="582.05" r="8" fill="#c83b28"/><path d="M398.40 576.05 V581.45 L401.50 581.65 V587.45 H399.30" fill="none" stroke="#fff" stroke-width="0.9"/><path d="M1374.07 583.56 A6.20 6.20 0 1 1 1381.02 587.86" fill="none" stroke="#666669" stroke-width="1.5"/><path d="M1380.30 577.15 A4.6 4.6 0 0 1 1380.30 586.35 Z" fill="#cfcfd2"/><path d="M1379.80 578.75 L1379.90 588.25 L1377.70 586.15 L1375.30 589.55 L1374.20 588.85 L1376.60 585.45 L1373.60 585.15 Z" fill="#666669"/><path d="M317.9 633.375 V624.6750000000001 L324 619.575 L330.1 624.6750000000001 V633.375 Z" fill="none" stroke="#a3a3a6" stroke-width="1.8" stroke-linejoin="miter"/><path d="M317.9 624.6750000000001 L324 628.775 L330.1 624.6750000000001" fill="none" stroke="#a3a3a6" stroke-width="1"/><path d="M364.00 619.77 L365.94 623.71 L370.28 624.34 L367.14 627.39 L367.88 631.71 L364.00 629.67 L360.12 631.71 L360.86 627.39 L357.72 624.34 L362.06 623.71 Z" fill="none" stroke="#6d6d70" stroke-width="1.1" stroke-linejoin="round"/><circle cx="400.00" cy="626.67" r="8" fill="#c83b28"/><path d="M398.40 620.67 V626.07 L401.50 626.27 V632.07 H399.30" fill="none" stroke="#fff" stroke-width="0.9"/><path d="M1374.07 628.19 A6.20 6.20 0 1 1 1381.02 632.49" fill="none" stroke="#666669" stroke-width="1.5"/><path d="M1380.30 621.77 A4.6 4.6 0 0 1 1380.30 630.98 Z" fill="#cfcfd2"/><path d="M1379.80 623.38 L1379.90 632.88 L1377.70 630.77 L1375.30 634.17 L1374.20 633.48 L1376.60 630.08 L1373.60 629.77 Z" fill="#666669"/><path d="M317.9 732.2 V723.5000000000001 L324 718.4000000000001 L330.1 723.5000000000001 V732.2 Z" fill="none" stroke="#a3a3a6" stroke-width="1.8" stroke-linejoin="miter"/><path d="M317.9 723.5000000000001 L324 727.6 L330.1 723.5000000000001" fill="none" stroke="#a3a3a6" stroke-width="1"/><path d="M364.00 718.60 L365.94 722.53 L370.28 723.16 L367.14 726.22 L367.88 730.54 L364.00 728.50 L360.12 730.54 L360.86 726.22 L357.72 723.16 L362.06 722.53 Z" fill="none" stroke="#6d6d70" stroke-width="1.1" stroke-linejoin="round"/><rect x="392.00" y="717.50" width="16" height="16" fill="#e8001c"/><text x="394.20" y="723.80" font-family="Liberation Sans" font-size="5.6" textLength="11.5" lengthAdjust="spacingAndGlyphs" fill="#fff" fill-opacity="0.85">Alter</text><text x="394.00" y="732.30" font-family="Liberation Sans" font-weight="bold" font-size="9" textLength="12" lengthAdjust="spacingAndGlyphs" fill="#fff">Eco</text><path d="M1374.07 727.01 A6.20 6.20 0 1 1 1381.02 731.31" fill="none" stroke="#666669" stroke-width="1.5"/><path d="M1380.30 720.60 A4.6 4.6 0 0 1 1380.30 729.80 Z" fill="#cfcfd2"/><path d="M1379.80 722.20 L1379.90 731.70 L1377.70 729.60 L1375.30 733.00 L1374.20 732.30 L1376.60 728.90 L1373.60 728.60 Z" fill="#666669"/><path d="M317.9 776.825 V768.1250000000001 L324 763.0250000000001 L330.1 768.1250000000001 V776.825 Z" fill="none" stroke="#a3a3a6" stroke-width="1.8" stroke-linejoin="miter"/><path d="M317.9 768.1250000000001 L324 772.225 L330.1 768.1250000000001" fill="none" stroke="#a3a3a6" stroke-width="1"/><path d="M364.00 763.23 L365.94 767.16 L370.28 767.79 L367.14 770.84 L367.88 775.16 L364.00 773.12 L360.12 775.16 L360.86 770.84 L357.72 767.79 L362.06 767.16 Z" fill="none" stroke="#6d6d70" stroke-width="1.1" stroke-linejoin="round"/><rect x="392" y="762.125" width="16" height="16" fill="#000"/><text x="393.3" y="773.725" font-family="Liberation Serif" font-weight="bold" font-size="15.5" fill="#fff">m</text><path d="M1374.07 771.64 A6.20 6.20 0 1 1 1381.02 775.94" fill="none" stroke="#666669" stroke-width="1.5"/><path d="M1380.30 765.23 A4.6 4.6 0 0 1 1380.30 774.43 Z" fill="#cfcfd2"/><path d="M1379.80 766.83 L1379.90 776.33 L1377.70 774.23 L1375.30 777.62 L1374.20 776.93 L1376.60 773.53 L1373.60 773.23 Z" fill="#666669"/><path d="M317.9 821.45 V812.7500000000001 L324 807.6500000000001 L330.1 812.7500000000001 V821.45 Z" fill="none" stroke="#a3a3a6" stroke-width="1.8" stroke-linejoin="miter"/><path d="M317.9 812.7500000000001 L324 816.85 L330.1 812.7500000000001" fill="none" stroke="#a3a3a6" stroke-width="1"/><path d="M364.00 807.85 L365.94 811.78 L370.28 812.41 L367.14 815.47 L367.88 819.79 L364.00 817.75 L360.12 819.79 L360.86 815.47 L357.72 812.41 L362.06 811.78 Z" fill="none" stroke="#6d6d70" stroke-width="1.1" stroke-linejoin="round"/><circle cx="400.00" cy="814.75" r="8" fill="#c83b28"/><path d="M398.40 808.75 V814.15 L401.50 814.35 V820.15 H399.30" fill="none" stroke="#fff" stroke-width="0.9"/><path d="M1374.07 816.26 A6.20 6.20 0 1 1 1381.02 820.56" fill="none" stroke="#666669" stroke-width="1.5"/><path d="M1380.30 809.85 A4.6 4.6 0 0 1 1380.30 819.05 Z" fill="#cfcfd2"/><path d="M1379.80 811.45 L1379.90 820.95 L1377.70 818.85 L1375.30 822.25 L1374.20 821.55 L1376.60 818.15 L1373.60 817.85 Z" fill="#666669"/></svg>
</body></html>
